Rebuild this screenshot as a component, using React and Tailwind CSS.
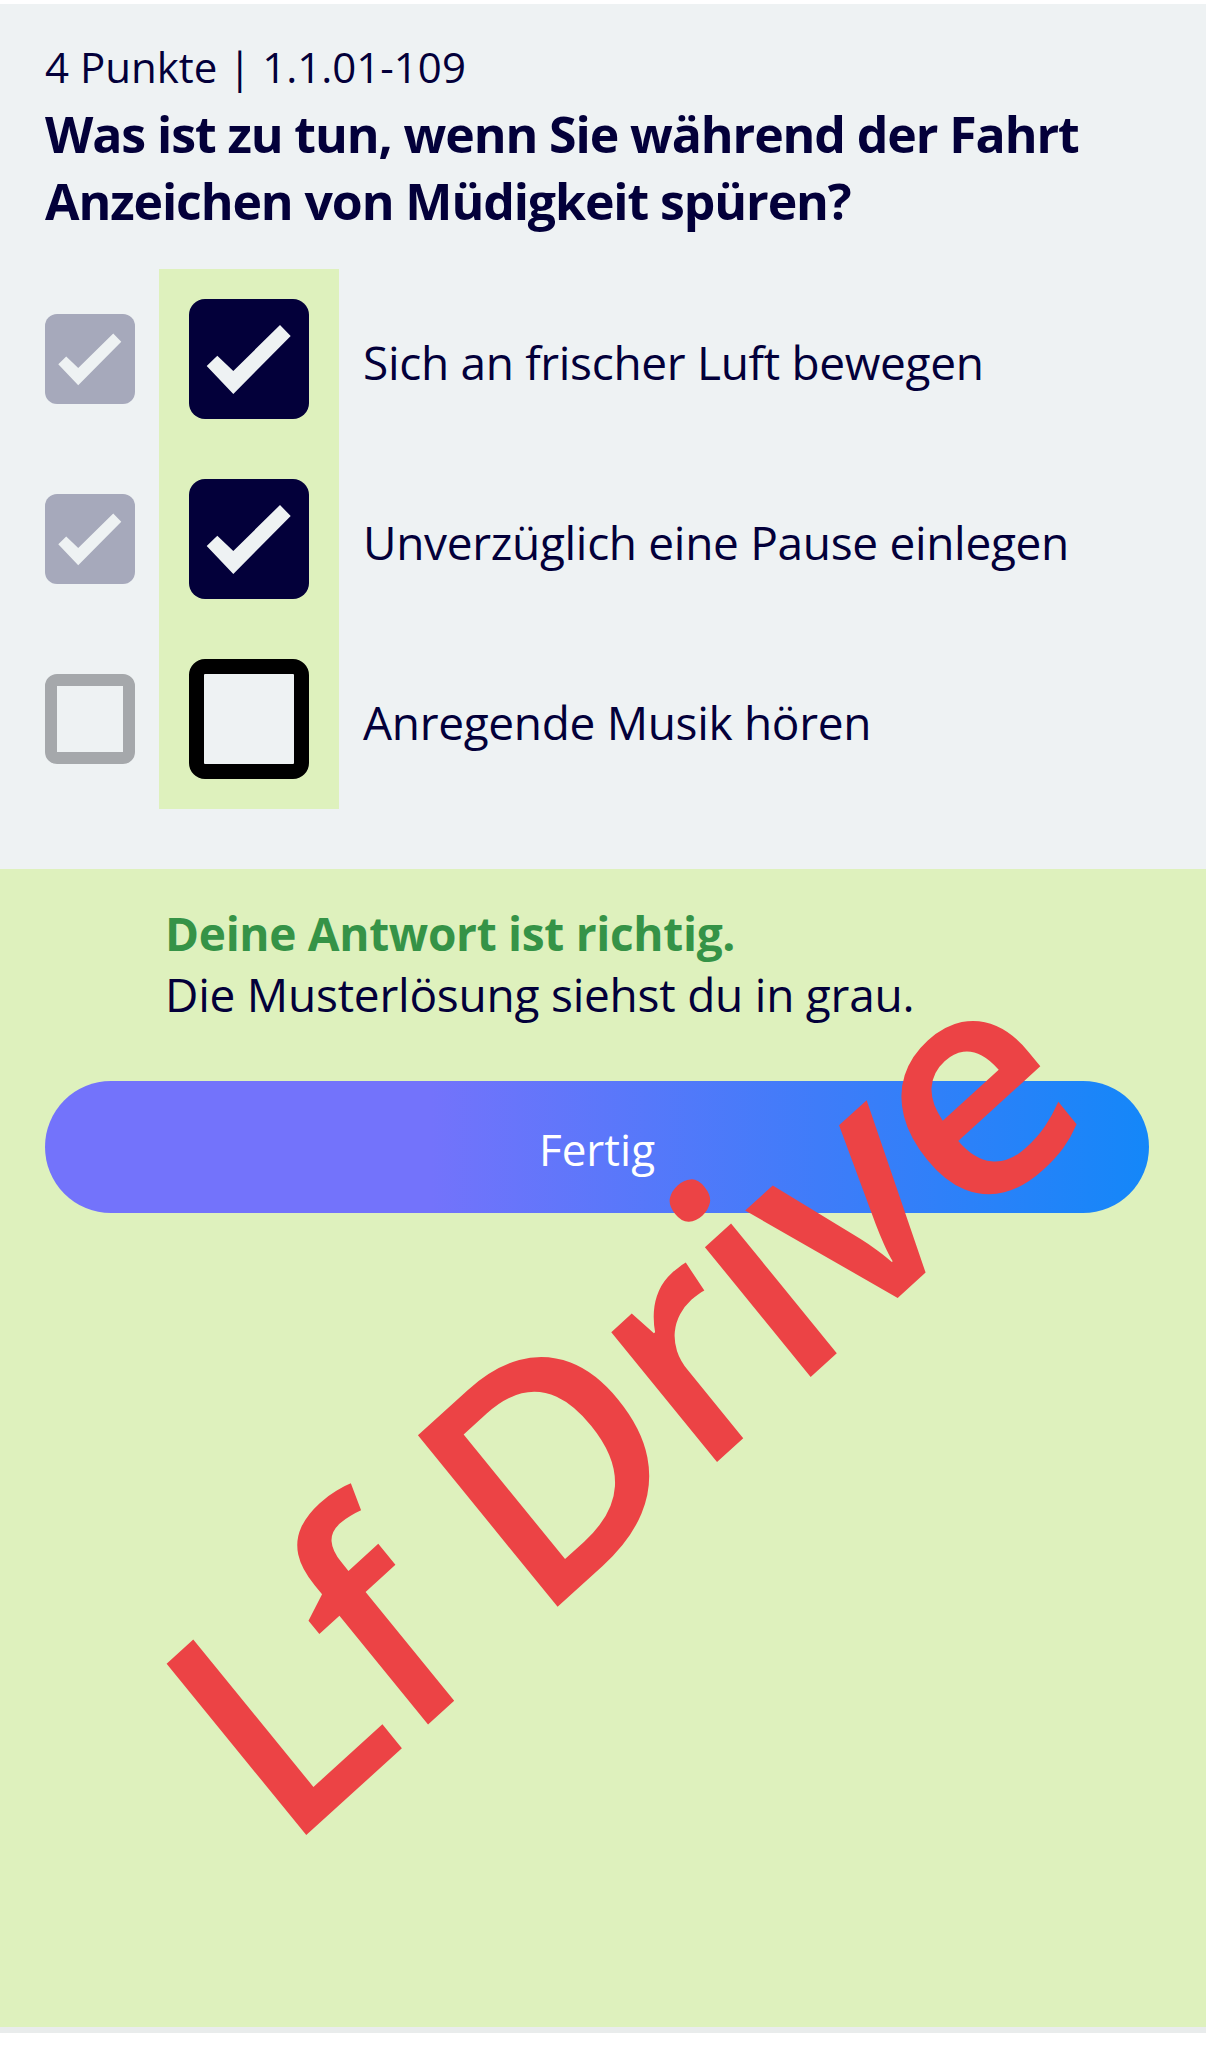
const CheckIcon = ({ className }) => (
  <svg viewBox="0 0 120 120" className={className}>
    <path d="M17.7 67 L28.3 56.7 L44.3 72 L91 26 L101.7 37 L44.3 95 Z" fill="#eef2f3" />
  </svg>
);

const answers = [
  { label: 'Sich an frischer Luft bewegen', checked: true },
  { label: 'Unverzüglich eine Pause einlegen', checked: true },
  { label: 'Anregende Musik hören', checked: false },
];

function AnswerRow({ label, checked }) {
  return (
    <div className="flex h-[180px] items-center">
      {checked ? (
        <div className="h-[90px] w-[90px] rounded-[12px] bg-[#a6a9bb]">
          <CheckIcon className="h-[90px] w-[90px]" />
        </div>
      ) : (
        <div className="h-[90px] w-[90px] rounded-[12px] border-[12px] border-[#a5a8ab]" />
      )}
      <div className="ml-[24px] flex h-[180px] w-[180px] items-center justify-center bg-[#def1bd]">
        {checked ? (
          <div className="h-[120px] w-[120px] rounded-[16px] bg-[#03003a]">
            <CheckIcon className="h-[120px] w-[120px]" />
          </div>
        ) : (
          <div className="h-[120px] w-[120px] rounded-[16px] border-[15px] border-black bg-[#eef2f3]" />
        )}
      </div>
      <span className="ml-[24px] pt-[5px] text-[46px] leading-[60px] tracking-[-0.32px]">{label}</span>
    </div>
  );
}

export default function App() {
  return (
    <div className="relative h-[2046px] w-[1206px] overflow-hidden bg-white font-['Open_Sans','Noto_Sans',sans-serif] text-[#03003a]">
      <div className="h-[4px] bg-white" />
      <div className="h-[865px] bg-[#eef2f3] px-[45px] pt-[35px]">
        <div className="text-[42px] leading-[56px]">4 Punkte | 1.1.01-109</div>
        <h1 className="mt-[6px] text-[50px] font-bold leading-[67px] tracking-[-1.1px]">
          Was ist zu tun, wenn Sie während der Fahrt
          <br />
          Anzeichen von Müdigkeit spüren?
        </h1>
        <div className="mt-[34px]">
          {answers.map((a) => (
            <AnswerRow key={a.label} {...a} />
          ))}
        </div>
      </div>

      <div className="h-[1158px] bg-[#def1bd] px-[45px] pt-[34px]">
        <div className="pl-[120px] text-[46px] leading-[61px]">
          <div className="font-bold tracking-[-0.3px] text-[#359347]">Deine Antwort ist richtig.</div>
          <div className="tracking-[-0.23px]">Die Musterlösung siehst du in grau.</div>
        </div>
        <button className="mt-[56px] flex h-[132px] w-[1104px] items-center justify-center rounded-[66px] bg-linear-to-r/srgb from-[#7373fb] from-[35%] via-[#3f7cf9] via-[70%] to-[#1487f9] pt-[4px] text-[44px] font-medium text-white">
          Fertig
        </button>
      </div>
      <div className="h-[6px] bg-[#e9ecec]" />

      <div className="pointer-events-none absolute left-[614px] top-[1394px] [transform:translate(-50%,-50%)_scaleY(1.056)_rotate(-40.7deg)] whitespace-nowrap text-[300px] font-semibold leading-none tracking-[-6px] text-[#ec4345]">
        Lf Drive
      </div>
    </div>
  );
}
